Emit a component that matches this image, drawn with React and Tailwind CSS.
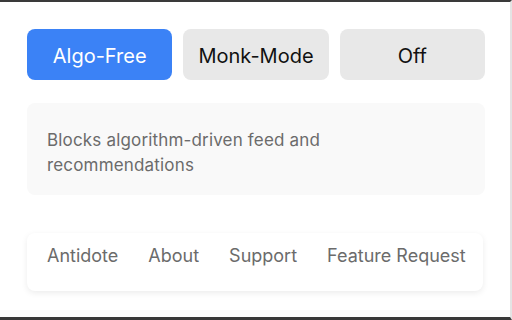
import React, { useState } from "react";

const modes = ["Algo-Free", "Monk-Mode", "Off"];
const links = ["Antidote", "About", "Support", "Feature Request"];

function App() {
  const [mode, setMode] = useState("Algo-Free");

  return (
    <div
      className="w-[512px] h-[320px] bg-white border-t-2 border-t-[#3a3a3a] border-b-[3px] border-b-[#3a3a3a] border-r-2 border-r-[#e4e4e4] overflow-hidden"
      style={{ fontFamily: "Inter, 'Noto Sans', sans-serif" }}
    >
      <div className="pl-[27px] pr-[25px] pt-[27px]">
        {/* mode switch */}
        <div className="grid grid-cols-3 gap-[11px]">
          {modes.map((m) => (
            <button
              key={m}
              onClick={() => setMode(m)}
              className={`h-[51px] pt-[2px] rounded-lg text-[20px] ${
                mode === m ? "bg-[#3b82f6] text-white" : "bg-[#e8e8e8] text-[#111]"
              }`}
            >
              {m}
            </button>
          ))}
        </div>

        {/* description */}
        <div className="mt-[23px] h-[92px] rounded-lg bg-[#f9f9f9] px-[20px] pt-[25px] pr-[30px]">
          <p className="text-[17px] leading-[25px] tracking-[0.01em] text-[#6b6b6b]">
            Blocks algorithm-driven feed and recommendations
          </p>
        </div>

        {/* footer links */}
        <div className="mt-[38px] mr-[2px] h-[58px] rounded-lg bg-white shadow-[0_2px_6px_rgba(0,0,0,0.08)] flex items-start gap-[30px] pl-[20px] pr-[4px] pt-[11px]">
          {links.map((l) => (
            <a key={l} href="#" className="whitespace-nowrap text-[18px] leading-[24px] text-[#6b6b6b]">
              {l}
            </a>
          ))}
        </div>
      </div>
    </div>
  );
}

export default App;
